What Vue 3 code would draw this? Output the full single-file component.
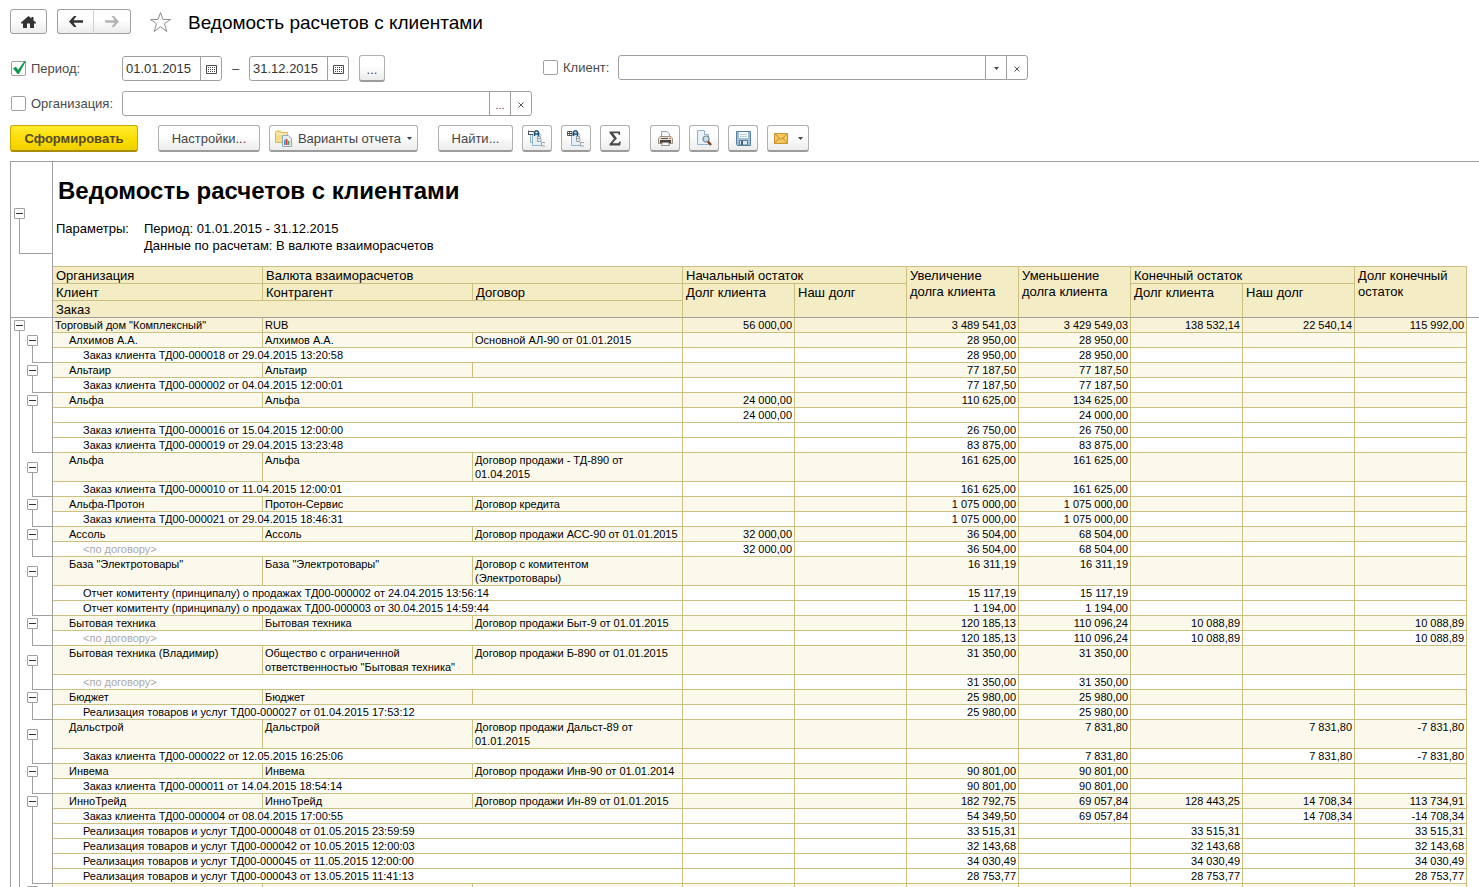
<script setup>
import { ref } from 'vue'

const usePeriod = ref(true)
const useOrg = ref(false)
const useClient = ref(false)
const dateFrom = ref('01.01.2015')
const dateTo = ref('31.12.2015')
const org = ref('')
const client = ref('')

const E = ''
const both = (v) => [E, E, v, v, E, E, E]
const final = (v) => [E, E, v, E, v, E, v]

const groups = [
  { cells: ['Алхимов А.А.', 'Алхимов А.А.', 'Основной АЛ-90 от 01.01.2015'], v: both('28 950,00'),
    items: [['Заказ клиента ТД00-000018 от 29.04.2015 13:20:58', both('28 950,00')]] },
  { cells: ['Альтаир', 'Альтаир', ''], v: both('77 187,50'),
    items: [['Заказ клиента ТД00-000002 от 04.04.2015 12:00:01', both('77 187,50')]] },
  { cells: ['Альфа', 'Альфа', ''], v: ['24 000,00', E, '110 625,00', '134 625,00', E, E, E],
    items: [
      ['', ['24 000,00', E, E, '24 000,00', E, E, E]],
      ['Заказ клиента ТД00-000016 от 15.04.2015 12:00:00', both('26 750,00')],
      ['Заказ клиента ТД00-000019 от 29.04.2015 13:23:48', both('83 875,00')],
    ] },
  { cells: ['Альфа', 'Альфа', 'Договор продажи - ТД-890 от 01.04.2015'], v: both('161 625,00'),
    items: [['Заказ клиента ТД00-000010 от 11.04.2015 12:00:01', both('161 625,00')]] },
  { cells: ['Альфа-Протон', 'Протон-Сервис', 'Договор кредита'], v: both('1 075 000,00'),
    items: [['Заказ клиента ТД00-000021 от 29.04.2015 18:46:31', both('1 075 000,00')]] },
  { cells: ['Ассоль', 'Ассоль', 'Договор продажи АСС-90 от 01.01.2015'], v: ['32 000,00', E, '36 504,00', '68 504,00', E, E, E],
    items: [['<по договору>', ['32 000,00', E, '36 504,00', '68 504,00', E, E, E]]] },
  { cells: ['База "Электротовары"', 'База "Электротовары"', 'Договор с комитентом\n(Электротовары)'], v: both('16 311,19'),
    items: [
      ['Отчет комитенту (принципалу) о продажах ТД00-000002 от 24.04.2015 13:56:14', both('15 117,19')],
      ['Отчет комитенту (принципалу) о продажах ТД00-000003 от 30.04.2015 14:59:44', both('1 194,00')],
    ] },
  { cells: ['Бытовая техника', 'Бытовая техника', 'Договор продажи Быт-9 от 01.01.2015'], v: [E, E, '120 185,13', '110 096,24', '10 088,89', E, '10 088,89'],
    items: [['<по договору>', [E, E, '120 185,13', '110 096,24', '10 088,89', E, '10 088,89']]] },
  { cells: ['Бытовая техника (Владимир)', 'Общество с ограниченной ответственностью "Бытовая техника"', 'Договор продажи Б-890 от 01.01.2015'], v: both('31 350,00'),
    items: [['<по договору>', both('31 350,00')]] },
  { cells: ['Бюджет', 'Бюджет', ''], v: both('25 980,00'),
    items: [['Реализация товаров и услуг ТД00-000027 от 01.04.2015 17:53:12', both('25 980,00')]] },
  { cells: ['Дальстрой', 'Дальстрой', 'Договор продажи Дальст-89 от 01.01.2015'], v: [E, E, E, '7 831,80', E, '7 831,80', '-7 831,80'],
    items: [['Заказ клиента ТД00-000022 от 12.05.2015 16:25:06', [E, E, E, '7 831,80', E, '7 831,80', '-7 831,80']]] },
  { cells: ['Инвема', 'Инвема', 'Договор продажи Инв-90 от 01.01.2014'], v: both('90 801,00'),
    items: [['Заказ клиента ТД00-000011 от 14.04.2015 18:54:14', both('90 801,00')]] },
  { cells: ['ИнноТрейд', 'ИнноТрейд', 'Договор продажи Ин-89 от 01.01.2015'], v: [E, E, '182 792,75', '69 057,84', '128 443,25', '14 708,34', '113 734,91'],
    items: [
      ['Заказ клиента ТД00-000004 от 08.04.2015 17:00:55', [E, E, '54 349,50', '69 057,84', E, '14 708,34', '-14 708,34']],
      ['Реализация товаров и услуг ТД00-000048 от 01.05.2015 23:59:59', final('33 515,31')],
      ['Реализация товаров и услуг ТД00-000042 от 10.05.2015 12:00:03', final('32 143,68')],
      ['Реализация товаров и услуг ТД00-000045 от 11.05.2015 12:00:00', final('34 030,49')],
      ['Реализация товаров и услуг ТД00-000043 от 13.05.2015 11:41:13', final('28 753,77')],
    ] },
  { cells: ['', '', ''], v: [E, E, E, E, E, E, E], items: [] },
]

const total = ['56 000,00', E, '3 489 541,03', '3 429 549,03', '138 532,14', '22 540,14', '115 992,00']
</script>

<template>
  <div class="page">
    <header class="head">
      <button class="btn home" aria-label="Начальная страница">
        <svg width="15" height="12" viewBox="0 0 15 12"><path d="M7.500 0 L10.500 2.600 V1 H12.500 V4.400 L15 6.600 V7.500 H13 V12 H9 V7.500 H6 V12 H2 V7.500 H0 V6.600 Z" fill="#333" /></svg>
      </button>
      <div class="nav">
        <button class="btn" aria-label="Назад">
          <svg width="14" height="11" viewBox="0 0 14 11"><path d="M0 5.500 L5 0 H7.500 L4.500 4.300 H14 V6.700 H4.500 L7.500 11 H5 Z" fill="#333" /></svg>
        </button>
        <button class="btn" aria-label="Вперед">
          <svg width="14" height="11" viewBox="0 0 14 11"><path d="M14 5.500 L9 0 H6.500 L9.500 4.300 H0 V6.700 H9.500 L6.500 11 H9 Z" fill="#b4b4b4" /></svg>
        </button>
      </div>
      <button class="star" aria-label="В избранное">
        <svg width="23" height="22" viewBox="0 0 23 22"><path d="M11.500 1.500 L14 8.500 H21.500 L15.500 12.700 L17.800 20.500 L11.500 15.800 L5.200 20.500 L7.500 12.700 L1.500 8.500 H9 Z" fill="#fff" stroke="#8f8f8f" /></svg>
      </button>
      <h1>Ведомость расчетов с клиентами</h1>
    </header>

    <section class="filters">
      <div class="row">
        <div class="left">
          <label class="check"><input v-model="usePeriod" type="checkbox" />Период:</label>
          <div class="field date">
            <input v-model="dateFrom" type="text" aria-label="Начало периода" />
            <button aria-label="Выбрать начало"><svg width="11" height="9" viewBox="0 0 11 9"><path d="M0.500 0.500 H10.500 V8.500 H0.500 Z" fill="none" stroke="#4a4a4a" /><path d="M2 2.500 H9 M2 4.500 H9 M2 6.500 H9" stroke="#4a4a4a" stroke-dasharray="1 1" /></svg></button>
          </div>
          <span class="dash">–</span>
          <div class="field date">
            <input v-model="dateTo" type="text" aria-label="Конец периода" />
            <button aria-label="Выбрать конец"><svg width="11" height="9" viewBox="0 0 11 9"><path d="M0.500 0.500 H10.500 V8.500 H0.500 Z" fill="none" stroke="#4a4a4a" /><path d="M2 2.500 H9 M2 4.500 H9 M2 6.500 H9" stroke="#4a4a4a" stroke-dasharray="1 1" /></svg></button>
          </div>
          <button class="btn more" aria-label="Выбрать период">...</button>
        </div>
        <div class="right">
          <label class="check"><input v-model="useClient" type="checkbox" />Клиент:</label>
          <div class="field wide">
            <input v-model="client" type="text" aria-label="Клиент" />
            <button aria-label="Открыть список"><svg width="5" height="3" viewBox="0 0 5 3"><path d="M0 0 H5 L2.500 3 Z" fill="#444" /></svg></button>
            <button aria-label="Очистить клиента"><svg width="6" height="6" viewBox="0 0 6 6"><path d="M0.500 0.500 L5.500 5.500 M5.500 0.500 L0.500 5.500" stroke="#555" /></svg></button>
          </div>
        </div>
      </div>
      <div class="row">
        <div class="left">
          <label class="check"><input v-model="useOrg" type="checkbox" />Организация:</label>
          <div class="field wide">
            <input v-model="org" type="text" aria-label="Организация" />
            <button class="dots" aria-label="Выбрать организацию">...</button>
            <button aria-label="Очистить организацию"><svg width="6" height="6" viewBox="0 0 6 6"><path d="M0.500 0.500 L5.500 5.500 M5.500 0.500 L0.500 5.500" stroke="#555" /></svg></button>
          </div>
        </div>
      </div>
    </section>

    <div class="toolbar">
      <button class="btn primary">Сформировать</button>
      <button class="btn settings">Настройки...</button>
      <button class="btn variants">
        <svg width="17" height="17" viewBox="0 0 17 17">
          <path d="M0.500 2.500 L1.500 1 H5.500 L6.500 2.500 H12.500 V12.500 H0.500 Z" fill="#f6dd8d" stroke="#d9b85a" />
          <path d="M1 4 H12" stroke="#fff3c4" />
          <path d="M7.500 5.500 H13.500 L16.500 8.500 V16.500 H7.500 Z" fill="#e3eef6" stroke="#8faabd" />
          <path d="M9 10 H10.500 V15 H9 Z" fill="#4a9ad0" /><path d="M10.500 9 H12.500 V15 H10.500 Z" fill="#e0403a" /><path d="M12.500 11 H14.500 V15 H12.500 Z" fill="#54a55a" />
        </svg>
        <span>Варианты отчета</span>
        <svg width="5" height="3" viewBox="0 0 5 3"><path d="M0 0 H5 L2.500 3 Z" fill="#444" /></svg>
      </button>
      <button class="btn find">Найти...</button>
      <button class="btn icon" aria-label="Свернуть группы">
        <svg width="18" height="17" viewBox="0 0 18 17">
          <path d="M2.500 5 V12.500 H4 M4.500 4 V15.500 H13 M11 3 L13.500 5.500" fill="none" stroke="#8fb4cb" />
          <path d="M5 4 H11 L13 6 V15 H5 Z" fill="#e4f0f8" />
          <path d="M0.500 0.500 V5 M0 1.500 H6 M0 4.500 H5" stroke="#555" fill="none" />
          <path d="M6.500 6 V2.500 L7.500 1 H9.500 L10.500 2.500 V6 M6.500 4 H10.500" fill="none" stroke="#1c4f78" stroke-width="1.500" />
          <path d="M9.500 6.500 H12.500 V8.500 H9.500 M9.500 6 V11.500 H13 V8.500 M17 12.500 H13.500 V16 H17" fill="none" stroke="#9aa0a4" />
        </svg>
      </button>
      <button class="btn icon" aria-label="Развернуть группы">
        <svg width="18" height="17" viewBox="0 0 18 17">
          <path d="M4.500 6 V15.500 H13 M11 3 L13.500 5.500" fill="none" stroke="#8fb4cb" />
          <path d="M5 4 H11 L13 6 V15 H5 Z" fill="#e4f0f8" />
          <path d="M0.500 1.500 H5 V5.500 H0.500 Z M0 3.500 H5 M2.500 1 V6" stroke="#555" fill="none" />
          <path d="M6.500 6 V2.500 L7.500 1 H9.500 L10.500 2.500 V6 M6.500 4 H10.500" fill="none" stroke="#1c4f78" stroke-width="1.500" />
          <path d="M9.500 6.500 H12.500 V8.500 H9.500 M9.500 6 V11.500 H13 V8.500 M17 12.500 H13.500 V16 H17" fill="none" stroke="#9aa0a4" />
        </svg>
      </button>
      <button class="btn icon" aria-label="Сумма">
        <svg width="12" height="15" viewBox="0 0 12 15"><path d="M0.500 0.500 H11 V4 H10 L9 2.200 H4 L8 7.200 L3.500 12.300 H9.500 L10.500 10.500 H11.800 L11.200 14.500 H0.500 V13 L5 7.800 L0.500 2 Z" fill="#4a4a4a" /></svg>
      </button>
      <button class="btn icon print" aria-label="Печать">
        <svg width="15" height="15" viewBox="0 0 15 15">
          <path d="M3.500 6 V0.500 H9 L11.500 3 V6 Z" fill="#f4f8fb" stroke="#91a7b6" />
          <path d="M2 5.500 H13 L14.500 7.500 V12.500 H0.500 V7.500 Z" fill="#e6e0d6" stroke="#9b9083" />
          <path d="M3 7.500 H10" stroke="#5d554c" /><path d="M11 7.500 H13" stroke="#e06b34" />
          <path d="M2 9 H13 V12 H2 Z" fill="#4a4541" /><path d="M4.500 11.500 H10.500 L11.500 14.500 H3.500 Z" fill="#fafafa" stroke="#9a8f82" />
        </svg>
      </button>
      <button class="btn icon" aria-label="Предварительный просмотр">
        <svg width="16" height="16" viewBox="0 0 16 16">
          <path d="M1.500 0.500 H8 L12.500 5 V14.500 H1.500 Z" fill="#e9f3f9" stroke="#8fb3ca" /><path d="M8.500 0.500 V4.500 H12.500" fill="#fff" stroke="#8fb3ca" />
          <circle cx="10" cy="9" r="3" fill="#c3dff0" stroke="#7d868c" stroke-width="1.200" /><path d="M12 11.500 L15 15" stroke="#7b4224" stroke-width="2.400" />
        </svg>
      </button>
      <button class="btn icon" aria-label="Сохранить">
        <svg width="15" height="15" viewBox="0 0 15 15">
          <path d="M0.500 0.500 H14.500 V14.500 H1.500 L0.500 13.500 Z" fill="#9dc0d7" stroke="#567f9b" />
          <path d="M3 1 H12 V7 H3 Z" fill="#f5fafc" /><path d="M4 3.500 H11 M4 5.500 H11" stroke="#bcd0dc" />
          <path d="M3.500 9.500 H11.500 V14 H3.500 Z" fill="#e4eaee" stroke="#5d7f95" /><path d="M5 10 H7 V14 H5 Z" fill="#3c6583" />
        </svg>
      </button>
      <button class="btn mail" aria-label="Отправить">
        <svg width="14" height="11" viewBox="0 0 14 11"><path d="M0.500 0.500 H13.500 V10.500 H0.500 Z" fill="#f5c65c" stroke="#d0922f" /><path d="M1 1 L7 6.500 L13 1 M1 10 L5 5 M13 10 L9 5" fill="none" stroke="#c98f35" /></svg>
        <svg width="5" height="3" viewBox="0 0 5 3"><path d="M0 0 H5 L2.500 3 Z" fill="#444" /></svg>
      </button>
    </div>

    <main class="sheet">
      <div class="intro">
        <div class="gutter">
          <button class="node" aria-label="Свернуть заголовок"></button>
          <div class="bracket"></div>
        </div>
        <div class="about">
          <h2>Ведомость расчетов с клиентами</h2>
          <dl>
            <dt>Параметры:</dt>
            <dd>Период: 01.01.2015 - 31.12.2015<br />Данные по расчетам: В валюте взаиморасчетов</dd>
          </dl>
        </div>
      </div>

      <table>
        <colgroup>
          <col class="c-tree" />
          <col v-for="n in 3" :key="'t' + n" class="c-text" />
          <col v-for="n in 7" :key="'n' + n" class="c-num" />
          <col />
        </colgroup>
        <thead>
          <tr class="first">
            <td class="tree" rowspan="3"></td>
            <th>Организация</th>
            <th colspan="2">Валюта взаиморасчетов</th>
            <th colspan="2">Начальный остаток</th>
            <th rowspan="3" class="deep">Увеличение<br />долга клиента</th>
            <th rowspan="3" class="deep">Уменьшение<br />долга клиента</th>
            <th colspan="2">Конечный остаток</th>
            <th rowspan="3" class="deep">Долг конечный<br />остаток</th>
            <td class="rest" rowspan="3"></td>
          </tr>
          <tr>
            <th>Клиент</th>
            <th>Контрагент</th>
            <th>Договор</th>
            <th rowspan="2" class="last">Долг клиента</th>
            <th rowspan="2" class="last">Наш долг</th>
            <th rowspan="2" class="last">Долг клиента</th>
            <th rowspan="2" class="last">Наш долг</th>
          </tr>
          <tr>
            <th colspan="3" class="last">Заказ</th>
          </tr>
        </thead>
        <tbody>
          <tr class="total">
            <td class="tree root"><button class="node" aria-label="Свернуть"></button></td>
            <td>Торговый дом "Комплексный"</td>
            <td colspan="2">RUB</td>
            <td v-for="(v, i) in total" :key="i" class="num">{{ v }}</td>
          </tr>
          <template v-for="(g, gi) in groups" :key="gi">
            <tr class="group">
              <td class="tree branch"><button class="node" aria-label="Свернуть"></button></td>
              <td v-for="(c, i) in g.cells" :key="'c' + i" class="name">{{ c }}</td>
              <td v-for="(v, i) in g.v" :key="'v' + i" class="num">{{ v }}</td>
            </tr>
            <tr v-for="(it, ii) in g.items" :key="gi + '-' + ii" class="item">
              <td class="tree" :class="ii === g.items.length - 1 ? 'end' : 'mid'"></td>
              <td colspan="3" :class="{ muted: it[0].startsWith('<') }">{{ it[0] }}</td>
              <td v-for="(v, i) in it[1]" :key="i" class="num">{{ v }}</td>
            </tr>
          </template>
        </tbody>
      </table>
    </main>
  </div>
</template>

<style>
body {
  background: #fff;
}
</style>

<style scoped>
.page {
  display: flex;
  flex-direction: column;
  height: 100vh;
  overflow: hidden;
  box-sizing: border-box;
  padding: 9px 0 0 10px;
  font-family: "Liberation Sans", Arial, sans-serif;
  font-size: 13px;
  color: #000;
}
.page * {
  box-sizing: border-box;
}
button,
input {
  font: inherit;
  color: #444;
}
svg {
  display: block;
  flex: none;
}
.btn {
  display: flex;
  align-items: center;
  justify-content: center;
  height: 27px;
  padding: 0;
  border: 1px solid #b0b0b0;
  border-bottom: 2px solid #9c9c9c;
  border-radius: 3px;
  background: linear-gradient(#fff 40%, #ececec);
}
.head {
  display: flex;
  align-items: center;
  height: 25px;
  flex: none;
}
.head .btn {
  height: 25px;
  width: 37px;
  border: 1px solid #a0a0a0;
}
.nav {
  display: flex;
  margin: 0 18px 0 10px;
}
.head .nav .btn:first-child {
  border-radius: 3px 0 0 3px;
  border-right-color: #d0d0d0;
}
.head .nav .btn:last-child {
  border-radius: 0 3px 3px 0;
  border-left: 0;
}
.star {
  padding: 0;
  border: 0;
  background: none;
}
.head h1 {
  margin: 0 0 0 16px;
  padding-top: 2px;
  font-size: 19px;
  font-weight: normal;
}
.filters {
  display: flex;
  flex-direction: column;
  gap: 9px;
  margin-top: 21px;
  flex: none;
}
.row {
  display: flex;
  align-items: flex-start;
}
.left {
  display: flex;
  align-items: center;
  width: 522px;
}
.right {
  display: flex;
  align-items: center;
  margin-left: 11px;
}
.check {
  display: flex;
  align-items: center;
  gap: 5px;
  color: #4a4a4a;
}
.left .check {
  width: 112px;
  padding-left: 1px;
}
.right .check {
  width: 75px;
}
.check input {
  appearance: none;
  flex: none;
  width: 15px;
  height: 15px;
  margin: 0;
  border: 1px solid #a0a0a0;
  border-radius: 2px;
  background: #fff;
}
.check input:checked {
  position: relative;
}
.check input:checked::after {
  content: "";
  position: absolute;
  left: 1px;
  top: -1px;
  width: 13px;
  height: 13px;
  background: #0c9a4c;
  clip-path: polygon(0 55%, 22% 45%, 40% 68%, 88% 0, 100% 0, 45% 100%, 35% 100%);
}
.field {
  display: flex;
  height: 25px;
  border: 1px solid #a0a0a0;
  border-radius: 3px;
  background: #fff;
}
.field.date {
  width: 100px;
}
.field.wide {
  width: 410px;
}
.field input {
  flex: 1;
  min-width: 0;
  padding: 0 0 0 3px;
  border: 0;
  outline: 0;
  background: none;
  color: #333;
}
.field button {
  display: flex;
  align-items: center;
  justify-content: center;
  width: 21px;
  padding: 2px 0 0;
  border: 0;
  border-left: 1px solid #a0a0a0;
  background: none;
}
.field .dots {
  font-size: 11px;
}
.dash {
  width: 27px;
  text-align: center;
  color: #444;
}
.more {
  width: 26px;
  margin-left: 10px;
  padding-top: 3px;
}
.toolbar {
  display: flex;
  gap: 9px;
  margin: 9px 0;
  flex: none;
}
.primary {
  width: 128px;
  margin-right: 11px;
  border-color: #c9a800;
  border-bottom-color: #a88d00;
  background: linear-gradient(#ffea30, #fbdc00 60%, #f0cf00);
  font-weight: bold;
  color: #54482a;
}
.settings {
  width: 102px;
}
.variants {
  gap: 6px;
  width: 149px;
}
.find {
  width: 75px;
  margin-left: 11px;
}
.icon {
  width: 30px;
}
.print {
  margin-left: 11px;
}
.mail {
  gap: 10px;
  width: 42px;
}
.sheet {
  flex: 1;
  min-height: 0;
  overflow: hidden;
  border-top: 1px solid #a0a0a0;
}
.intro {
  display: flex;
  height: 104px;
}
.gutter {
  flex: none;
  width: 43px;
  padding-top: 46px;
  border: solid #a0a0a0;
  border-width: 0 1px;
}
.node {
  display: block;
  width: 11px;
  height: 11px;
  margin-left: 3px;
  padding: 0;
  border: 1px solid #a0a0a0;
  border-radius: 1px;
  background: linear-gradient(#333, #333) center / 7px 1px no-repeat #fff;
}
.bracket {
  height: 35px;
  margin-left: 8px;
  border: solid #a0a0a0;
  border-width: 0 0 1px 1px;
}
.about h2 {
  margin: 15px 0 0 5px;
  font-size: 24px;
  line-height: 28px;
}
.about dl {
  display: flex;
  margin: 15px 0 0 3px;
  line-height: 17px;
}
.about dt {
  width: 88px;
}
.about dd {
  margin: 0;
}
table {
  width: 100%;
  table-layout: fixed;
  border-collapse: separate;
  border-spacing: 0;
}
.c-tree {
  width: 43px;
}
.c-text {
  width: 210px;
}
.c-num {
  width: 112px;
}
th {
  height: 17px;
  padding: 1px 3px 0;
  border: solid #ccc080;
  border-width: 0 1px 1px 0;
  background: #f4ecc5;
  font-weight: normal;
  line-height: 15px;
  text-align: left;
  vertical-align: top;
}
.first th {
  height: 18px;
  border-top-width: 1px;
}
.first th.deep {
  line-height: 16px;
}
th.last,
.first th.deep,
.rest,
thead .tree {
  border-bottom: 1px solid #a0a0a0;
}
td {
  padding: 0 2px;
}
tbody td {
  border: solid #ccc080;
  border-width: 0 1px 1px 0;
  font-size: 11px;
  line-height: 14px;
  vertical-align: top;
}
td.tree {
  padding: 0;
  border-left: 1px solid #a0a0a0;
  border-right: 1px solid #a0a0a0;
}
tbody td.tree {
  border-bottom: 0;
  vertical-align: middle;
  background-repeat: no-repeat;
}
.root {
  background-image: linear-gradient(#a0a0a0, #a0a0a0);
  background-size: 1px 50%;
  background-position: 8px 100%;
}
.branch {
  background-image: linear-gradient(#a0a0a0, #a0a0a0), linear-gradient(#a0a0a0, #a0a0a0);
  background-size: 1px 100%, 1px 50%;
  background-position: 8px 0, 21px 100%;
}
.branch .node {
  margin-left: 16px;
}
.mid {
  background-image: linear-gradient(#a0a0a0, #a0a0a0), linear-gradient(#a0a0a0, #a0a0a0);
  background-size: 1px 100%, 1px 100%;
  background-position: 8px 0, 21px 0;
}
.end {
  background-image: linear-gradient(#a0a0a0, #a0a0a0), linear-gradient(#a0a0a0, #a0a0a0), linear-gradient(#a0a0a0, #a0a0a0);
  background-size: 1px 100%, 1px 100%, 20px 1px;
  background-position: 8px 0, 21px 0, 21px 100%;
}
tbody tr {
  height: 15px;
}
.total td:not(.tree) {
  background: #f8f2d8;
}
.group td:not(.tree) {
  background: #fbf9eb;
}
.name {
  white-space: pre-line;
}
.group td:nth-child(2) {
  padding-left: 16px;
}
.item td:nth-child(2) {
  padding-left: 30px;
}
.item td.muted {
  color: #a9a9a9;
}
td.num {
  text-align: right;
  white-space: nowrap;
}
</style>
